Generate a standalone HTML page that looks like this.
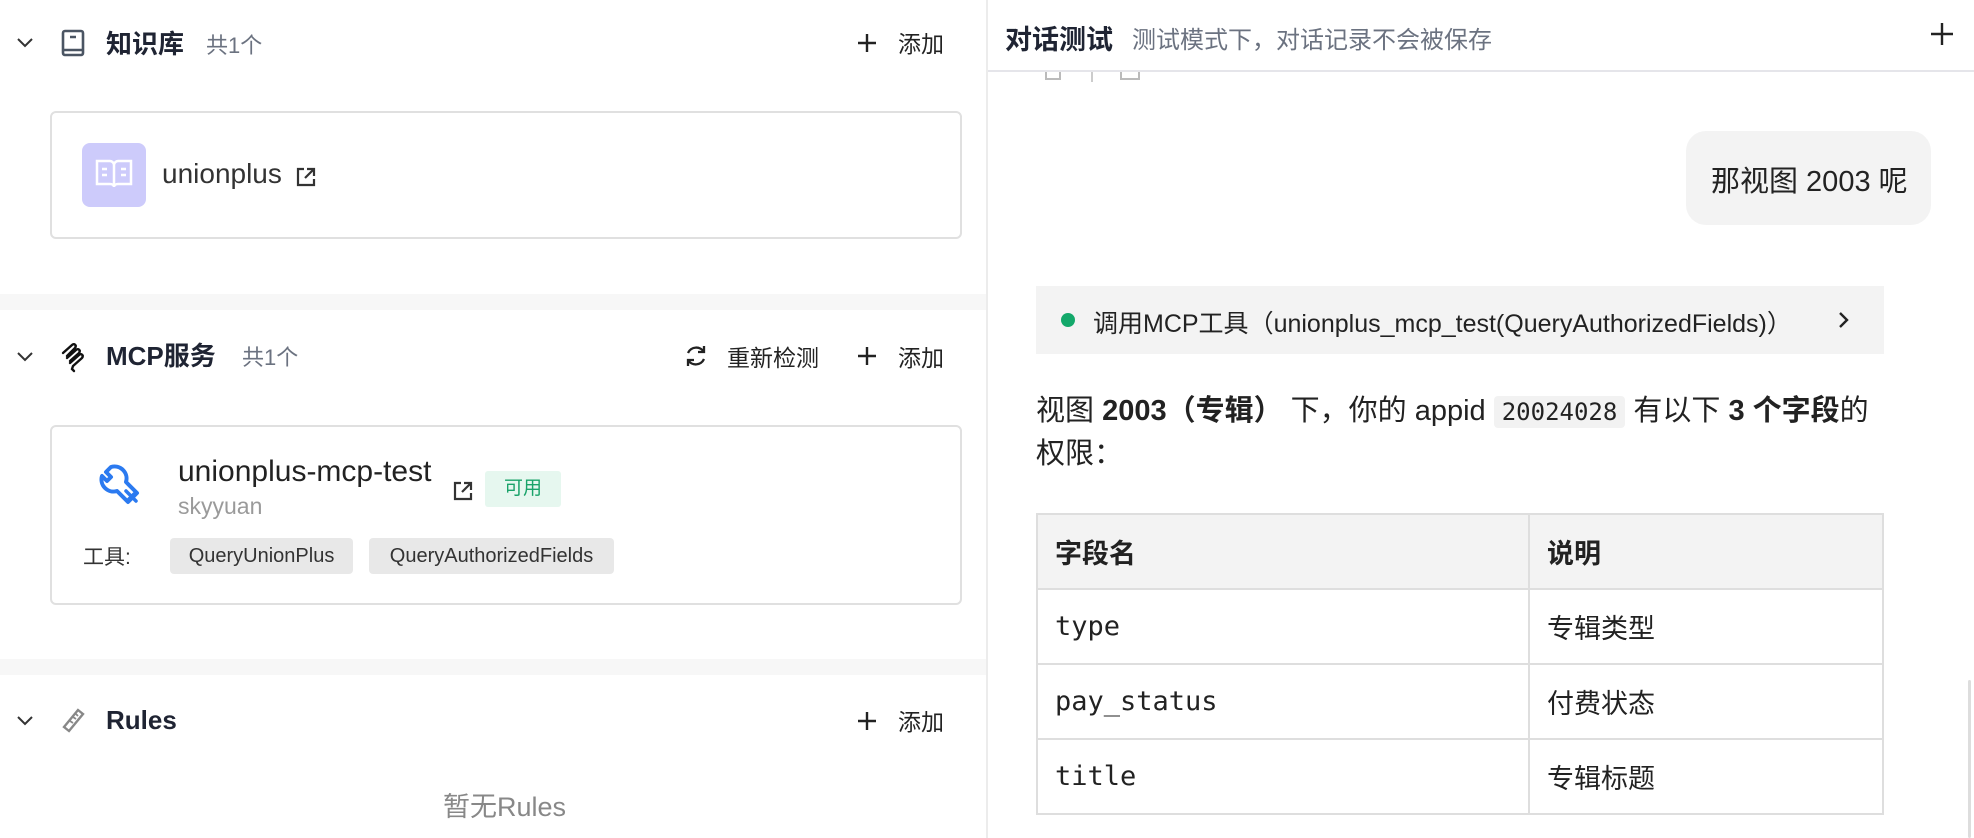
<!DOCTYPE html>
<html><head><meta charset="utf-8"><style>
*{box-sizing:border-box;margin:0;padding:0}
body{width:1974px;height:838px;overflow:hidden;background:#fff;font-family:"Liberation Sans","Noto Sans CJK SC",sans-serif;color:#222;position:relative}
.a{position:absolute;white-space:nowrap}
.h{font-size:26px;font-weight:bold;color:#1f2433}
.cnt{font-size:22px;color:#6b7280}
.btn{font-size:23px;color:#222}
.sep{position:absolute;left:0;width:987px;height:16px;background:#f7f7f7}
.card{position:absolute;left:50px;width:912px;border:2px solid #e0e0e0;border-radius:6px}
.tag{position:absolute;top:538px;height:36px;background:#e8e8e8;border-radius:4px;font-size:20px;line-height:36px;text-align:center;color:#333}
table{position:absolute;left:1036px;top:513px;width:848px;border-collapse:collapse;table-layout:fixed}
td{border:2px solid #dedede;height:75px;padding-left:17px;font-size:27px}
.m{font-family:"DejaVu Sans Mono","Liberation Mono",monospace;font-size:27px;color:#222}
</style></head><body>
<!-- left panel -->
<svg class="a" style="left:16px;top:36px" width="18" height="14" viewBox="0 0 18 14"><path d="M2 3l7 7 7-7" fill="none" stroke="#333" stroke-width="2"/></svg>
<svg class="a" style="left:60px;top:29px" width="26" height="28" viewBox="0 0 26 28"><rect x="3" y="2" width="20" height="24" rx="2" fill="none" stroke="#4b5563" stroke-width="2.6"/><path d="M3 21h20M10 8h6" stroke="#4b5563" stroke-width="2.6"/></svg>
<div class="a h" style="left:106px;top:24px">知识库</div>
<div class="a cnt" style="left:206px;top:28px">共1个</div>
<svg class="a" style="left:857px;top:33px" width="20" height="20" viewBox="0 0 20 20"><path d="M10 1v18M1 10h18" stroke="#222" stroke-width="2.4"/></svg>
<div class="a btn" style="left:898px;top:25px">添加</div>

<div class="card" style="top:111px;height:128px"></div>
<div class="a" style="left:82px;top:143px;width:64px;height:64px;background:#cdcbfb;border-radius:8px"></div>
<svg class="a" style="left:92px;top:153px" width="44" height="44" viewBox="0 0 44 44"><path d="M5 8h13c2 0 4 2 4 4v22c0-2-2-3-4-3H5zM39 8H26c-2 0-4 2-4 4v22c0-2 2-3 4-3h13z" fill="none" stroke="#fff" stroke-width="2.5"/><path d="M10 16h5M10 22h5M29 16h5M29 22h5" stroke="#fff" stroke-width="2.5"/></svg>
<div class="a" style="left:162px;top:158px;font-size:28px;color:#333">unionplus</div>
<svg class="a" style="left:295px;top:166px" width="22" height="22" viewBox="0 0 22 22"><path d="M9 3H3v16h16v-6M12 3h7v7M19 3l-9 9" fill="none" stroke="#333" stroke-width="2.2"/></svg>

<div class="sep" style="top:294px"></div>

<svg class="a" style="left:16px;top:350px" width="18" height="14" viewBox="0 0 18 14"><path d="M2 3l7 7 7-7" fill="none" stroke="#333" stroke-width="2"/></svg>
<svg class="a" style="left:60px;top:341px" width="26" height="32" viewBox="0 0 26 32"><path d="M3 12L12 4c2-2 5 0 3 3L7 15M7 17l9-8c2-2 5 0 3 3L10 20M10 22l9-8c2-2 5 0 3 3L13 25l-1 3 2 2" fill="none" stroke="#111" stroke-width="2.4" stroke-linecap="round"/></svg>
<div class="a h" style="left:106px;top:336px">MCP服务</div>
<div class="a cnt" style="left:242px;top:340px">共1个</div>
<svg class="a" style="left:683px;top:343px" width="26" height="26" viewBox="0 0 26 26"><path d="M21 9A9 9 0 0 0 5 10M5 17a9 9 0 0 0 16-1M21 3v6h-6M5 23v-6h6" fill="none" stroke="#222" stroke-width="2.3"/></svg>
<div class="a btn" style="left:727px;top:339px">重新检测</div>
<svg class="a" style="left:857px;top:346px" width="20" height="20" viewBox="0 0 20 20"><path d="M10 1v18M1 10h18" stroke="#222" stroke-width="2.4"/></svg>
<div class="a btn" style="left:898px;top:339px">添加</div>

<div class="card" style="top:425px;height:180px"></div>
<svg class="a" style="left:90px;top:455px" width="70" height="70" viewBox="0 0 70 70"><path d="M21 12L16 17L21 22L17 26L12 21A12 12 0 0 0 27 36L38 47L47 38L36 27A12 12 0 0 0 21 12Z" fill="none" stroke="#2b7af0" stroke-width="4" stroke-linejoin="round"/><path d="M36 36L46 46M38 45L44 39" stroke="#2b7af0" stroke-width="3.5" stroke-linecap="round"/></svg>
<div class="a" style="left:178px;top:455px;font-size:30px;color:#222">unionplus-mcp-test</div>
<div class="a" style="left:178px;top:493px;font-size:23px;color:#9a9a9a">skyyuan</div>
<svg class="a" style="left:452px;top:480px" width="22" height="22" viewBox="0 0 22 22"><path d="M9 3H3v16h16v-6M12 3h7v7M19 3l-9 9" fill="none" stroke="#333" stroke-width="2.2"/></svg>
<div class="a" style="left:485px;top:471px;width:76px;height:36px;background:#e6f7ef;border-radius:3px;color:#1aa36a;font-size:19px;line-height:36px;text-align:center">可用</div>
<div class="a" style="left:83px;top:541px;font-size:21px;color:#333">工具:</div>
<div class="tag" style="left:170px;width:183px">QueryUnionPlus</div>
<div class="tag" style="left:369px;width:245px">QueryAuthorizedFields</div>

<div class="sep" style="top:659px"></div>

<svg class="a" style="left:16px;top:714px" width="18" height="14" viewBox="0 0 18 14"><path d="M2 3l7 7 7-7" fill="none" stroke="#333" stroke-width="2"/></svg>
<svg class="a" style="left:60px;top:707px" width="26" height="28" viewBox="0 0 26 28"><path d="M4 20L18 3l5 4L9 24z" fill="none" stroke="#888" stroke-width="2.4"/><path d="M10 14l3 2M13 10l3 2M16 7l2 2" stroke="#888" stroke-width="1.8"/></svg>
<div class="a h" style="left:106px;top:705px">Rules</div>
<svg class="a" style="left:857px;top:711px" width="20" height="20" viewBox="0 0 20 20"><path d="M10 1v18M1 10h18" stroke="#222" stroke-width="2.4"/></svg>
<div class="a btn" style="left:898px;top:703px">添加</div>
<div class="a" style="left:443px;top:785px;font-size:27px;color:#888">暂无Rules</div>

<!-- right panel -->
<div class="a" style="left:986px;top:0;width:2px;height:838px;background:#ececec"></div>
<div class="a" style="left:988px;top:70px;width:986px;height:2px;background:#e5e5ea"></div>
<div class="a h" style="left:1005px;top:18px;font-size:27px">对话测试</div>
<div class="a" style="left:1132px;top:20px;font-size:24px;color:#6b7280">测试模式下，对话记录不会被保存</div>
<svg class="a" style="left:1930px;top:22px" width="24" height="24" viewBox="0 0 24 24"><path d="M12 1v22M1 12h22" stroke="#222" stroke-width="2.4"/></svg>
<div class="a" style="left:1045px;top:72px;width:16px;height:8px;border:2px solid #bbb;border-top:none"></div>
<div class="a" style="left:1091px;top:72px;width:2px;height:10px;background:#ccc"></div>
<div class="a" style="left:1120px;top:72px;width:20px;height:8px;border:2px solid #bbb;border-top:none"></div>

<div class="a" style="left:1686px;top:131px;width:245px;height:94px;background:#f3f3f3;border-radius:20px"></div>
<div class="a" style="left:1711px;top:158px;font-size:29px;color:#222">那视图 2003 呢</div>

<div class="a" style="left:1036px;top:286px;width:848px;height:68px;background:#f3f3f3"></div>
<div class="a" style="left:1061px;top:313px;width:14px;height:14px;border-radius:50%;background:#13a86a"></div>
<div class="a" style="left:1093px;top:304px;font-size:25px;color:#222">调用MCP工具<span>（unionplus_mcp_test(QueryAuthorizedFields)）</span></div>
<svg class="a" style="left:1836px;top:310px" width="14" height="20" viewBox="0 0 14 20"><path d="M4 3l7 7-7 7" fill="none" stroke="#222" stroke-width="2.4"/></svg>

<div class="a" style="left:1036px;top:387px;font-size:29px;color:#222">视图 <b>2003（专辑）</b> 下，你的 appid <span style="display:inline-block;background:#f2f2f2;border-radius:4px;padding:2px 8px;font-family:'DejaVu Sans Mono',monospace;font-size:24px">20024028</span> 有以下 <b>3 个字段</b>的</div>
<div class="a" style="left:1036px;top:430px;font-size:29px;color:#222">权限：</div>

<table>
<tr style="background:#f3f3f3"><td style="width:492px;font-weight:bold">字段名</td><td style="font-weight:bold">说明</td></tr>
<tr><td class="m">type</td><td>专辑类型</td></tr>
<tr><td class="m">pay_status</td><td>付费状态</td></tr>
<tr><td class="m">title</td><td>专辑标题</td></tr>
</table>
<div class="a" style="left:1968px;top:680px;width:3px;height:158px;background:#ddd;border-radius:2px"></div>
</body></html>
